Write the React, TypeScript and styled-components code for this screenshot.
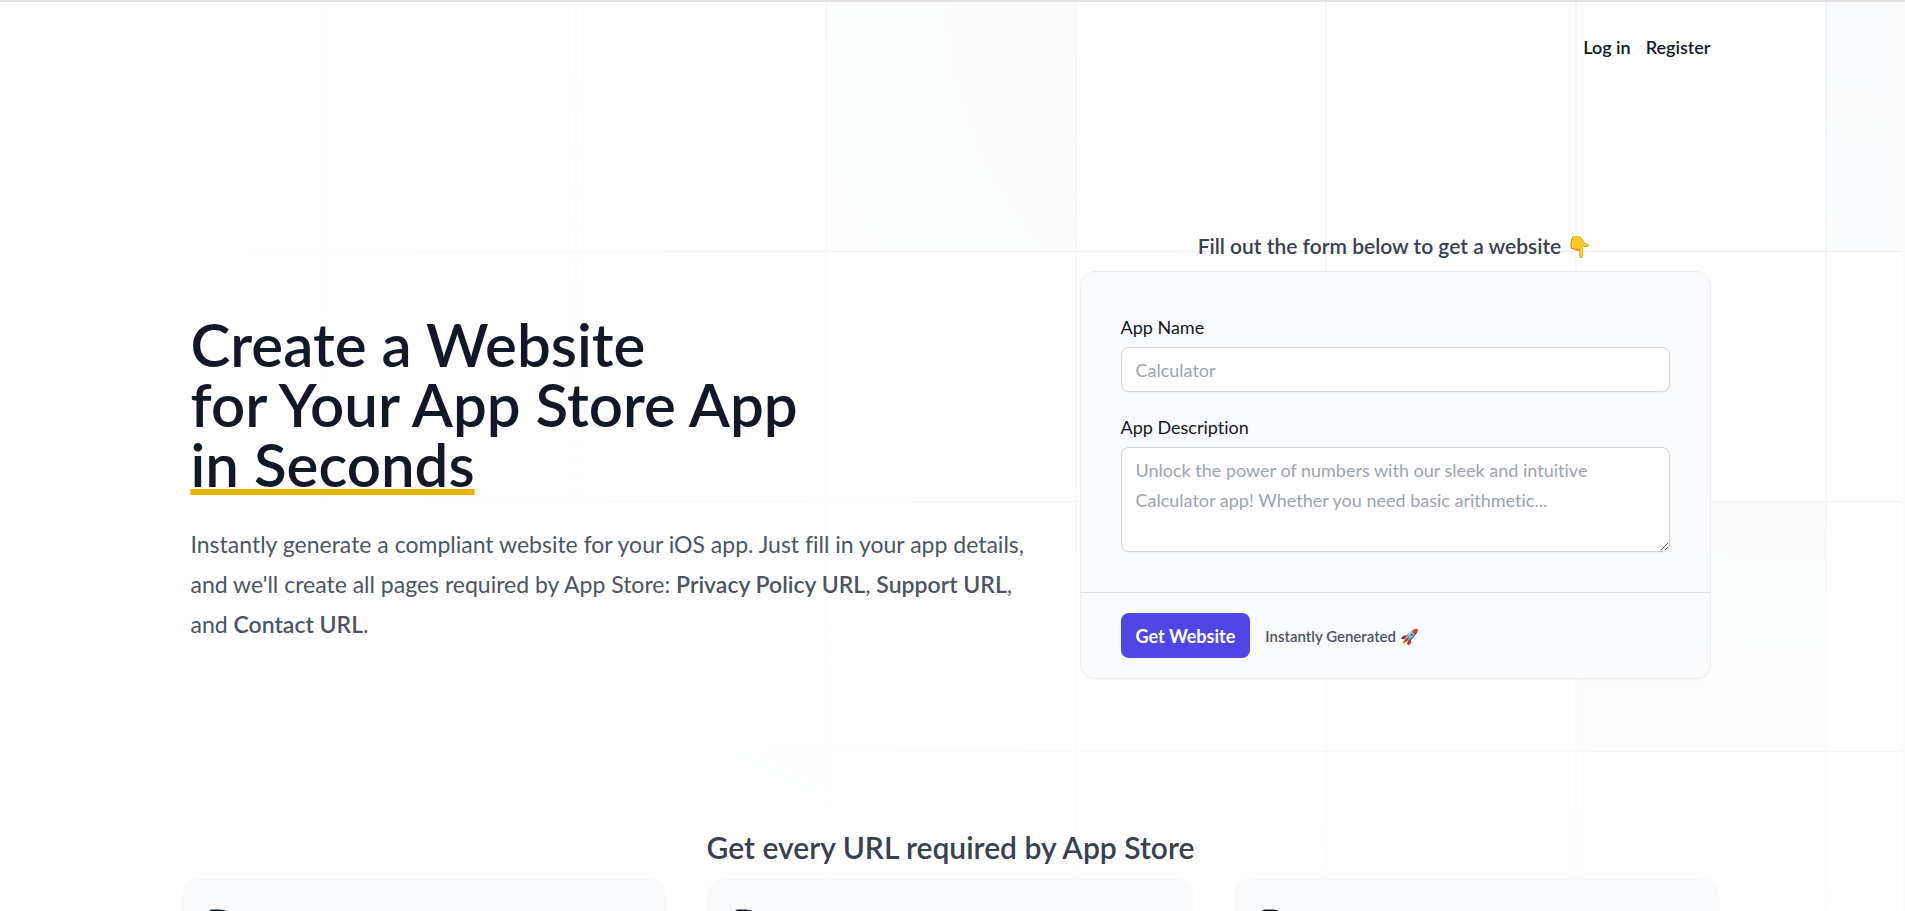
import React from 'react';
import styled, { createGlobalStyle } from 'styled-components';

const GlobalStyle = createGlobalStyle`
  *, *::before, *::after { box-sizing: border-box; }
  body {
    margin: 0;
    background: #fff;
    color: #111827;
    font-family: Lato, "Liberation Sans", sans-serif;
    font-size: 18px;
    font-variant-ligatures: none;
    line-height: 30px;
    overflow: hidden;
  }
  h1, h2, h3, p { margin: 0; }
`;

const Shell = styled.div`
  display: flex;
  height: 100vh;
  overflow: hidden;
  border-top: 2px solid #e1e2de;
`;

const ScrollGutter = styled.div`
  flex: none;
  width: 4px;
  background: #fbfbfb;
`;

const Page = styled.div`
  position: relative;
  isolation: isolate;
  flex: 1;
  min-width: 0;
`;

const Backdrop = styled.svg`
  position: absolute;
  top: 0;
  left: 0;
  z-index: -1;
  width: 100%;
  height: 1120px;
  stroke: #e5e7eb;
  mask-image: radial-gradient(100% 100% at top right, white, transparent);
`;

const Container = styled.div`
  max-width: 1600px;
  margin: 0 auto;
  padding: 0 40px;
`;

const Nav = styled.nav`
  display: flex;
  justify-content: flex-end;
  gap: 15px;
  padding: 30px 0;
`;

const NavLink = styled.a`
  color: #111827;
  font-weight: 600;
  text-decoration: none;
`;

const Hero = styled.main`
  display: flex;
  justify-content: space-between;
  align-items: flex-start;
  padding-top: 139px;
`;

const Intro = styled.div`
  width: 850px;
  padding-top: 83px;
`;

const Title = styled.h1`
  font-size: 60px;
  line-height: 60px;
  font-weight: 600;
`;

const Marked = styled.span`
  text-decoration: underline;
  text-decoration-color: #eab308;
  text-decoration-thickness: 6px;
  text-underline-offset: 2px;
`;

const Lead = styled.p`
  margin-top: 30px;
  color: #4b5563;
  font-size: 23px;
  line-height: 40px;

  strong { font-weight: 600; }
`;

const FormColumn = styled.div`
  width: 631px;
`;

const FormTitle = styled.h2`
  margin-bottom: 10px;
  color: #374151;
  font-size: 21px;
  line-height: 30px;
  font-weight: 600;
  text-align: center;
`;

const FormCard = styled.form`
  border: 1px solid #eceef0;
  border-radius: 15px;
  background: #f9fafb;
  box-shadow: 0 1px 2px rgba(0, 0, 0, 0.04);
`;

const Fields = styled.div`
  display: flex;
  flex-direction: column;
  gap: 20px;
  padding: 40px;
`;

const Field = styled.div`
  display: flex;
  flex-direction: column;
  gap: 5px;
`;

const fieldBox = `
  display: block;
  width: 100%;
  padding: 7px 14px;
  border: 1px solid #d1d5db;
  border-radius: 8px;
  background: #fff;
  box-shadow: 0 1px 2px rgba(0, 0, 0, 0.05);
  color: #111827;
  font: inherit;
  &::placeholder { color: #9ca3af; opacity: 1; }
`;

const TextInput = styled.input`
  ${fieldBox}
  height: 45px;
`;

const TextArea = styled.textarea`
  ${fieldBox}
  height: 105px;
  resize: vertical;
`;

const FormFooter = styled.div`
  display: flex;
  align-items: center;
  gap: 15px;
  padding: 20px 40px;
  border-top: 1px solid #dfe2e6;
`;

const SubmitButton = styled.button`
  height: 45px;
  padding: 0 15px;
  border: 0;
  border-radius: 8px;
  background: #4f46e5;
  color: #fff;
  font: inherit;
  font-weight: 700;
`;

const Hint = styled.span`
  color: #4b5563;
  font-size: 15px;
  font-weight: 600;
`;

const Features = styled.section`
  max-width: 1600px;
  margin: 0 auto;
  padding: 148px 30px 0;
`;

const FeaturesTitle = styled.h2`
  margin-bottom: 10px;
  color: #374151;
  font-size: 30px;
  line-height: 40px;
  font-weight: 600;
  text-align: center;
`;

const FeatureGrid = styled.div`
  display: grid;
  grid-template-columns: repeat(3, 1fr);
  gap: 40px;
`;

const FeatureCard = styled.article`
  min-height: 200px;
  padding: 30px 22px;
  border-radius: 20px;
  background: #f9fafb;
`;

const DocumentIcon = () => (
  <svg
    width="38"
    height="38"
    viewBox="0 0 24 24"
    fill="none"
    stroke="#111827"
    strokeWidth="1.5"
    strokeLinecap="round"
    strokeLinejoin="round"
    aria-hidden="true"
  >
    <path d="M19.5 14.25v-2.625a3.375 3.375 0 0 0-3.375-3.375h-1.5A1.125 1.125 0 0 1 13.5 7.125v-1.5a3.375 3.375 0 0 0-3.375-3.375H8.25m2.25 0H5.625c-.621 0-1.125.504-1.125 1.125v17.25c0 .621.504 1.125 1.125 1.125h12.75c.621 0 1.125-.504 1.125-1.125V11.25a9 9 0 0 0-9-9Z" />
  </svg>
);

const features = ['privacy', 'support', 'contact'];

export default function App() {
  return (
    <>
      <GlobalStyle />
      <Shell>
        <Page>
          <Backdrop aria-hidden="true">
            <defs>
              <pattern id="grid" width="250" height="250" x="50%" y="-1" patternUnits="userSpaceOnUse" patternTransform="translate(125 0)">
                <path d="M.5 250V.5H250" fill="none" />
              </pattern>
            </defs>
            <svg x="50%" y="-1" overflow="visible">
              <path
                d="M-125 0h250v250h-250Z M875 0h250v250h-250Z M625 500h250v250h-250Z M-375 750h250v250h-250Z"
                fill="#f9fafb"
                strokeWidth="0"
              />
            </svg>
            <rect width="100%" height="100%" strokeWidth="0" fill="url(#grid)" />
          </Backdrop>
          <Container>
            <Nav>
              <NavLink href="#login">Log in</NavLink>
              <NavLink href="#register">Register</NavLink>
            </Nav>
            <Hero>
              <Intro>
                <Title>
                  Create a Website
                  <br />
                  for Your App Store App
                  <br />
                  <Marked>in Seconds</Marked>
                </Title>
                <Lead>
                  Instantly generate a compliant website for your iOS app. Just fill in your app details, and we'll
                  create all pages required by App Store: <strong>Privacy Policy URL</strong>,{' '}
                  <strong>Support URL</strong>, and <strong>Contact URL</strong>.
                </Lead>
              </Intro>
              <FormColumn>
                <FormTitle>Fill out the form below to get a website 👇</FormTitle>
                <FormCard>
                  <Fields>
                    <Field>
                      <label htmlFor="app-name">App Name</label>
                      <TextInput id="app-name" type="text" placeholder="Calculator" />
                    </Field>
                    <Field>
                      <label htmlFor="app-description">App Description</label>
                      <TextArea
                        id="app-description"
                        placeholder="Unlock the power of numbers with our sleek and intuitive Calculator app! Whether you need basic arithmetic..."
                      />
                    </Field>
                  </Fields>
                  <FormFooter>
                    <SubmitButton type="submit">Get Website</SubmitButton>
                    <Hint>Instantly Generated 🚀</Hint>
                  </FormFooter>
                </FormCard>
              </FormColumn>
            </Hero>
          </Container>
          <Features>
            <FeaturesTitle>Get every URL required by App Store</FeaturesTitle>
            <FeatureGrid>
              {features.map((name) => (
                <FeatureCard key={name}>
                  <DocumentIcon />
                </FeatureCard>
              ))}
            </FeatureGrid>
          </Features>
        </Page>
        <ScrollGutter />
      </Shell>
    </>
  );
}
